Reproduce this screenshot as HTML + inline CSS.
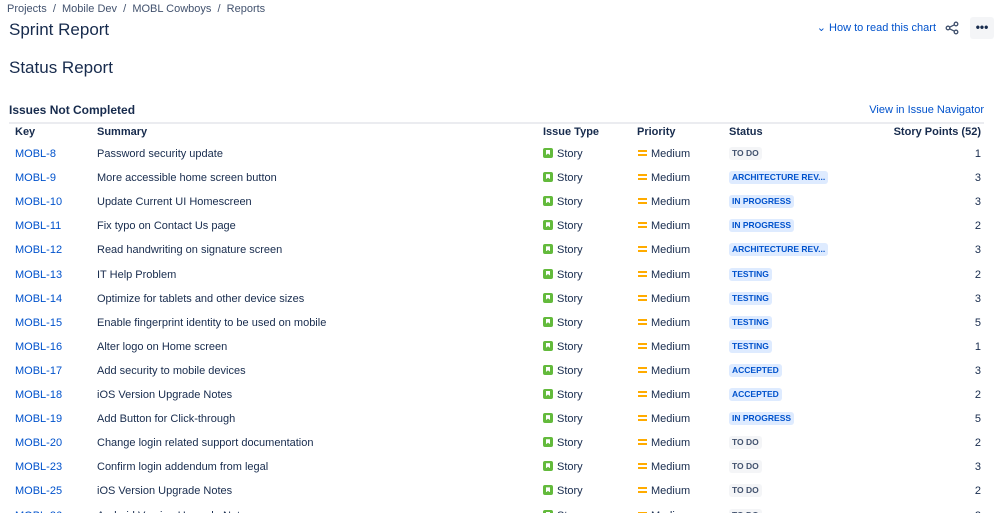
<!DOCTYPE html>
<html><head><meta charset="utf-8"><style>
*{margin:0;padding:0;box-sizing:border-box}
html,body{width:999px;height:513px;overflow:hidden}
body{background:#fff;font-family:"Liberation Sans",sans-serif;color:#172b4d;position:relative}
.a{position:absolute;white-space:nowrap}
.bc{top:3px;left:7px;font-size:11px;color:#42526e}
.h1{top:20px;left:9px;font-size:17px}
.h2{top:58px;left:9px;font-size:17px}
.h3{top:103px;left:9px;font-size:12px;font-weight:bold}
.lnk{color:#0052cc}
.hr{position:absolute;left:9px;top:122px;width:975px;height:2px;background:#ebecf0}
.th{top:126px;font-size:11px;font-weight:bold}
.row{position:absolute;left:0;width:999px;height:24px;font-size:11px}
.row span{position:absolute;top:0;line-height:14px;white-space:nowrap}
.ic{width:10px;height:10px;background:#63ba3c;border-radius:2px;top:1px!important}
.ic::after{content:"";position:absolute;left:3px;top:2px;width:4px;height:5px;background:#fff;clip-path:polygon(0 0,100% 0,100% 100%,50% 70%,0 100%)}
.pr{width:9px;height:6px;border-top:2px solid #ffab00;border-bottom:2px solid #ffab00;top:3px!important}
.lz{font-size:8.5px;font-weight:bold;padding:0 3px;border-radius:3px;line-height:13px!important;top:0!important;background:#deebff;color:#0052cc}
.lz.g{background:#f4f5f7;color:#42526e}
</style></head><body>
<div class="a bc">Projects &nbsp;/&nbsp; Mobile Dev &nbsp;/&nbsp; MOBL Cowboys &nbsp;/&nbsp; Reports</div>
<div class="a h1">Sprint Report</div>
<div class="a lnk" style="top:21px;right:63px;font-size:11px">&#8964; How to read this chart</div>
<svg class="a" style="top:21px;left:945px" width="14" height="14" viewBox="0 0 14 14" fill="none" stroke="#42526e" stroke-width="1.3"><circle cx="11" cy="3" r="1.8"/><circle cx="3" cy="7" r="1.8"/><circle cx="11" cy="11" r="1.8"/><path d="M4.6 6.2L9.4 3.8M4.6 7.8L9.4 10.2"/></svg>
<div class="a" style="top:17px;left:970px;width:24px;height:22px;background:#f4f5f7;border-radius:3px;text-align:center;font-size:12px;line-height:20px;font-weight:bold;color:#172b4d">•••</div>
<div class="a h2">Status Report</div>
<div class="a h3">Issues Not Completed</div>
<div class="a lnk" style="top:104px;right:15px;font-size:11px">View in Issue Navigator</div>
<div class="hr"></div>
<div class="a th" style="left:15px">Key</div>
<div class="a th" style="left:97px">Summary</div>
<div class="a th" style="left:543px">Issue Type</div>
<div class="a th" style="left:637px">Priority</div>
<div class="a th" style="left:729px">Status</div>
<div class="a th" style="right:18px">Story Points (52)</div>
<div id="rows"></div>
<script>
var d=[["MOBL-8","Password security update","TO DO",1],["MOBL-9","More accessible home screen button","ARCHITECTURE REV...",3],["MOBL-10","Update Current UI Homescreen","IN PROGRESS",3],["MOBL-11","Fix typo on Contact Us page","IN PROGRESS",2],["MOBL-12","Read handwriting on signature screen","ARCHITECTURE REV...",3],["MOBL-13","IT Help Problem","TESTING",2],["MOBL-14","Optimize for tablets and other device sizes","TESTING",3],["MOBL-15","Enable fingerprint identity to be used on mobile","TESTING",5],["MOBL-16","Alter logo on Home screen","TESTING",1],["MOBL-17","Add security to mobile devices","ACCEPTED",3],["MOBL-18","iOS Version Upgrade Notes","ACCEPTED",2],["MOBL-19","Add Button for Click-through","IN PROGRESS",5],["MOBL-20","Change login related support documentation","TO DO",2],["MOBL-23","Confirm login addendum from legal","TO DO",3],["MOBL-25","iOS Version Upgrade Notes","TO DO",2],["MOBL-26","Android Version Upgrade Notes","TO DO",2]];
var h="";d.forEach(function(r,i){var t=147+i*24.1;h+='<div class="row" style="top:'+t+'px"><span class="lnk" style="left:15px">'+r[0]+'</span><span style="left:97px">'+r[1]+'</span><span class="ic" style="left:543px"></span><span style="left:557px">Story</span><span class="pr" style="left:638px"></span><span style="left:651px">Medium</span><span class="lz'+(r[2]=="TO DO"?" g":"")+'" style="left:729px">'+r[2]+'</span><span style="right:18px">'+r[3]+'</span></div>';});
document.getElementById("rows").innerHTML=h;
</script>
</body></html>
